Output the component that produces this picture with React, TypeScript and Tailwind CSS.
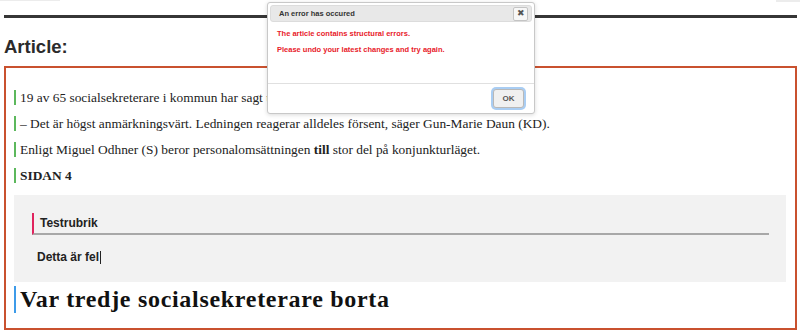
import React from "react"

const serif = "font-['Liberation_Serif',serif]"
const sans = "font-['Liberation_Sans',Arial,sans-serif]"

function Para({ children }: { children: React.ReactNode }) {
  return (
    <p className={`mb-[11px] border-l-2 border-[#5cb85c] pl-[4px] text-[13.4px] leading-[15px] text-[#222] ${serif}`}>
      {children}
    </p>
  )
}

function ErrorDialog() {
  return (
    <div className={`absolute left-[267px] top-[2px] flex h-[112px] w-[268px] flex-col rounded-[3px] border border-[#c8c8c8] bg-white shadow-[0_1px_4px_rgba(0,0,0,0.15)] ${sans}`}>
      <div className="m-[2px] flex h-[17px] items-center justify-between rounded-[3px] border border-[#dcdcdc] bg-[#e8e8e8] pl-[8px] pr-[3px]">
        <span className="text-[7.5px] font-bold text-[#333]">An error has occured</span>
        <button className="flex h-[14px] w-[15px] items-center justify-center rounded-[2px] border border-[#c4c4c4] bg-[#f7f7f7] text-[9px] leading-none text-[#555]">
          ✖
        </button>
      </div>
      <div className="flex-1 px-[9px] pt-[5px] text-[7.5px] font-bold text-[#e8202a]">
        <p className="leading-[10px]">The article contains structural errors.</p>
        <p className="mt-[6px] leading-[10px]">Please undo your latest changes and try again.</p>
      </div>
      <div className="flex h-[30px] items-center justify-end border-t border-[#e0e0e0] pr-[10px]">
        <button className="h-[19px] w-[31px] rounded-[3px] border border-[#b8b8b8] bg-[#f0f0f0] text-[8px] font-bold text-[#555] shadow-[0_0_0_2px_#a9cdf3]">
          OK
        </button>
      </div>
    </div>
  )
}

export default function App() {
  return (
    <div className="relative h-[331px] w-[800px] overflow-hidden bg-white">
      <div className="flex h-[15px] justify-between">
        <div className="h-[1px] w-[60px] bg-[#ececec]" />
        <div className="h-[2px] w-[24px] bg-[#ececec]" />
      </div>
      <div className="mx-[4px] mr-[3px] h-[3px] bg-[#363636]" />

      <h2 className={`ml-[4px] mt-[18px] text-[18.5px] font-bold leading-[22px] text-[#2b2b2b] ${sans}`}>Article:</h2>

      <div className="ml-[4px] mr-[3px] mt-[8px] border-2 border-[#c9512f] pb-[15px] pl-[8px] pr-[9px] pt-[22px]">
        <Para>19 av 65 socialsekreterare i kommun har sagt upp sig det senaste året.</Para>
        <Para>– Det är högst anmärkningsvärt. Ledningen reagerar alldeles försent, säger Gun-Marie Daun (KD).</Para>
        <Para>
          Enligt Miguel Odhner (S) beror personalomsättningen <b>till</b> stor del på konjunkturläget.
        </Para>
        <Para>
          <b>SIDAN 4</b>
        </Para>

        <div className={`mt-[12px] bg-[#f2f2f2] pb-[17px] pl-[18px] pr-[17px] pt-[18px] ${sans}`}>
          <div className="border-b-2 border-l-2 border-b-[#a8a8a8] border-l-[#e0245e] pl-[6px] text-[12px] font-bold leading-[20px] text-[#222]">
            Testrubrik
          </div>
          <div className="mt-[14px] flex items-center pl-[5px] text-[12px] font-bold leading-[16px] text-[#222]">
            Detta är fel
            <span className="ml-[1px] inline-block h-[13px] w-[1px] bg-[#222]" />
          </div>
        </div>

        <h1 className={`mt-[4px] border-l-2 border-[#3d9be9] pl-[4px] text-[24px] font-bold leading-[27px] tracking-[0.7px] text-[#111] ${serif}`}>
          Var tredje socialsekreterare borta
        </h1>
      </div>

      <ErrorDialog />
    </div>
  )
}
